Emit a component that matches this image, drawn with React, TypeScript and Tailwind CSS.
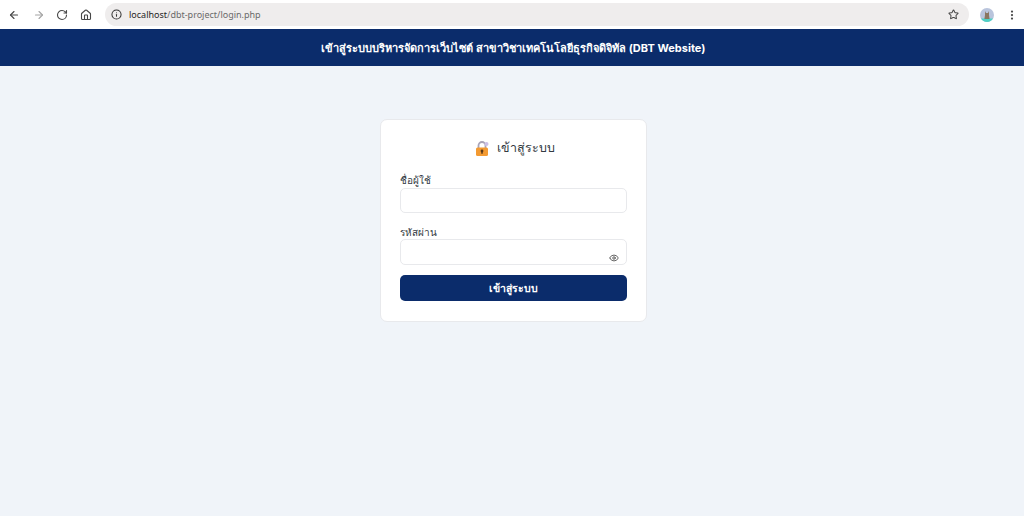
import React from 'react';
import { ArrowLeft, ArrowRight, RotateCw, Home, Info, Star, EllipsisVertical, Eye } from 'lucide-react';

const font = "font-['Inter','Noto_Sans','Liberation_Sans',sans-serif]";

const Avatar = () => (
  <svg width="14" height="14" viewBox="0 0 14 14">
    <circle cx="7" cy="7" r="7" fill="#b9c4dc" />
    <path d="M1 10.5h12A7 7 0 0 1 7 14a7 7 0 0 1-6-3.5z" fill="#4fd0c4" />
    <path d="M5 3l1 2h2l1-2v4l.6 4H4.4L5 7z" fill="#8a7660" />
  </svg>
);

const LockIcon = () => (
  <svg width="14" height="15" viewBox="0 0 14 15">
    <path d="M3.5 7V4.5a3.5 3.5 0 0 1 7 0V7" fill="none" stroke="#a9a4b8" strokeWidth="1.8" />
    <circle cx="11.5" cy="3" r="2" fill="#cbbfe6" />
    <rect x="1" y="6.5" width="12" height="8.5" rx="1.5" fill="#f39a32" />
    <circle cx="7" cy="10" r="1.4" fill="#5a3a1a" />
    <rect x="6.3" y="10" width="1.4" height="2.8" fill="#5a3a1a" />
  </svg>
);

export default function App() {
  return (
    <div className={`min-h-[516px] bg-[#f0f4f9] ${font}`}>
      <div className="flex h-[29px] items-center bg-white pl-[8px] pr-[6px]">
        <ArrowLeft size={12} className="text-[#474747]" strokeWidth={2.2} />
        <ArrowRight size={12} className="ml-[13px] text-[#a4a4a4]" strokeWidth={2.2} />
        <RotateCw size={12} className="ml-[11px] text-[#474747]" strokeWidth={2.2} />
        <Home size={12} className="ml-[12px] text-[#474747]" strokeWidth={2.2} />
        <div className="ml-[13px] flex h-[23px] flex-1 items-center rounded-full bg-[#efeded] pl-[6px] pr-[10px]">
          <Info size={11} className="text-[#333333]" strokeWidth={2.2} />
          <span className="ml-[7px] font-['Noto_Sans'] text-[9px] text-[#1f1f1f]">
            localhost<span className="text-[#6a6a6a]">/dbt-project/login.php</span>
          </span>
          <Star size={11} className="ml-auto text-[#474747]" strokeWidth={2.2} />
        </div>
        <div className="ml-[11px]"><Avatar /></div>
        <EllipsisVertical size={12} className="ml-[12px] text-[#474747]" strokeWidth={2.5} />
      </div>

      <header className="flex h-[37px] items-center justify-center bg-[#0b2c6b] pt-px pl-[3px] text-[11px] font-bold text-white">
        เข้าสู่ระบบบริหารจัดการเว็บไซต์ สาขาวิชาเทคโนโลยีธุรกิจดิจิทัล (DBT Website)
      </header>

      <div className="flex justify-center pt-[54px] pl-[3px]">
        <div className="-mt-px h-[203px] w-[267px] rounded-[7px] border border-[#e8e9ec] bg-white px-[19px] pt-[18px]">
          <h2 className="flex h-[20px] items-center justify-center gap-[8px] pl-[2px] text-[12.5px] font-medium text-[#333a42]">
            <LockIcon />
            เข้าสู่ระบบ
          </h2>
          <label className="mt-[14px] block text-[10px] font-medium leading-[16px] text-[#333a42]">ชื่อผู้ใช้</label>
          <div className="h-[25px] rounded-[5px] border border-[#e8e9ec] bg-white" />
          <label className="mt-[12px] block text-[10px] font-medium leading-[14px] text-[#333a42]">รหัสผ่าน</label>
          <div className="relative h-[26px] rounded-[5px] border border-[#e8e9ec] bg-white">
            <Eye size={10} className="absolute right-[7px] top-[13px] text-[#555555]" strokeWidth={2.2} />
          </div>
          <button className="mt-[10px] h-[26px] w-full rounded-[5px] bg-[#0b2c6b] pt-px text-[10.5px] font-bold text-white">
            เข้าสู่ระบบ
          </button>
        </div>
      </div>
    </div>
  );
}
